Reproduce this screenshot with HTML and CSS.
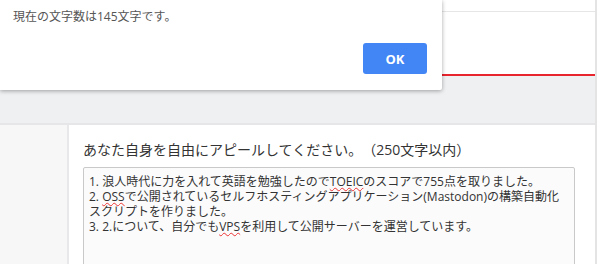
FILE: index.html
```html
<!DOCTYPE html>
<html lang="ja">
<head>
    <meta charset="UTF-8">
    <meta name="viewport" content="width=device-width, initial-scale=1.0">
    <title>自己PR</title>
    <link rel="stylesheet" href="styles.css">
</head>
<body>

<div class="page">
    <div class="main">
        <div class="top-row"></div>
        <div class="error-row"></div>
        <div class="gap"></div>
        <div class="form-row">
            <div class="label-col"></div>
            <div class="field-col">
                <p class="question">あなた自身を自由にアピールしてください。（250文字以内）</p>
                <div class="answer">1. 浪人時代に力を入れて英語を勉強したので<span class="typo">TOEIC</span>のスコアで755点を取りました。
2. <span class="typo">OSS</span>で公開されているセルフホスティングアプリケーション(Mastodon)の構築自動化スクリプトを作りました。
3. 2.について、自分でも<span class="typo">VPS</span>を利用して公開サーバーを運営しています。</div>
            </div>
        </div>
    </div>

    <div class="dialog">
        <p class="dialog-msg">現在の文字数は145文字です。</p>
        <div class="dialog-actions">
            <button class="ok-btn">OK</button>
        </div>
    </div>
</div>

</body>
</html>
```

FILE: styles.css
```css
body {
    margin: 0;
    padding: 0;
    background-color: #fff;
    font-family: "Open Sans", "Noto Sans CJK JP", sans-serif;
    color: #333;
    text-spacing-trim: space-all;
}
.page {
    position: relative;
    width: 606px;
    height: 264px;
    overflow: hidden;
}
.main {
    width: 595px;
    border-right: 2px solid #e4e4e4;
    height: 264px;
}
.top-row {
    height: 11px;
    border-bottom: 1px solid #e6e6e6;
    background-color: #fff;
}
.error-row {
    height: 62px;
    border-bottom: 2px solid #e8242c;
    background-color: #fff;
}
.gap {
    height: 47px;
    background-color: #eff0f2;
    border-bottom: 2px solid #e6e6e8;
}
.form-row {
    display: grid;
    grid-template-columns: 69px 1fr;
    height: 200px;
}
.label-col {
    background-color: #f7f7f8;
    border-right: 2px solid #e8e8ea;
}
.field-col {
    padding: 15px 0 0 14px;
    background-color: #fff;
}
.question {
    margin: 0 0 7px;
    font-size: 14px;
    line-height: 20px;
    color: #333;
}
.answer {
    width: 480px;
    height: 120px;
    padding: 6px 5px;
    border: 1px solid #c9c9c9;
    border-radius: 2px;
    background-color: #fbfbfb;
    font-size: 12px;
    line-height: 15px;
    color: #333;
    white-space: pre-wrap;
}
.typo {
    text-decoration: underline wavy #e33;
    text-decoration-thickness: 1px;
    text-underline-offset: 1px;
}
.dialog {
    position: absolute;
    top: 0;
    left: 0;
    width: 442px;
    height: 90px;
    box-sizing: border-box;
    padding: 9px 15px 0 13px;
    background-color: #fff;
    border-bottom-right-radius: 2px;
    box-shadow: 0 1px 4px rgba(0, 0, 0, 0.35);
}
.dialog-msg {
    margin: 0;
    font-size: 12px;
    line-height: 16px;
    color: #555;
}
.dialog-actions {
    display: flex;
    justify-content: flex-end;
    margin-top: 18px;
}
.ok-btn {
    width: 64px;
    height: 31px;
    border: none;
    border-radius: 3px;
    background-color: #4285f4;
    color: #fff;
    font-family: "Open Sans", "Noto Sans", sans-serif;
    font-weight: bold;
    font-size: 13px;
    cursor: pointer;
}
```
